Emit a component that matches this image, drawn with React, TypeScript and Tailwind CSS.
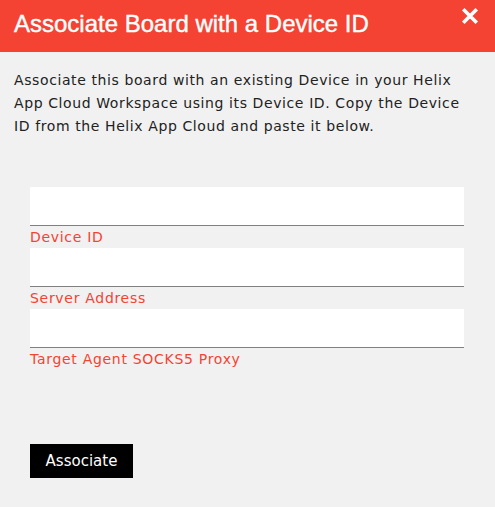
import React from "react";

const verdana = { fontFamily: "Verdana, 'DejaVu Sans', sans-serif" };

function Field({ label }: { label: string }) {
  return (
    <div className="flex flex-col">
      <input
        type="text"
        className="h-[39px] w-full bg-white border-0 border-b border-b-[#808080] outline-none"
      />
      <div className="h-[22px] text-[14px] leading-[22px] text-[#f44332] tracking-[0.7px]">{label}</div>
    </div>
  );
}

export default function App() {
  return (
    <div className="w-[495px] h-[507px] bg-[#f1f1f1] flex flex-col" style={verdana}>
      <div className="h-[52px] bg-[#f44332] flex items-start justify-between pl-[14px] pr-[17px] shrink-0">
        <div
          className="text-white text-[24px] leading-[24px] mt-[12px]"
          style={{ fontFamily: "'Liberation Sans', Arial, sans-serif", WebkitTextStroke: "0.4px white" }}
        >
          Associate Board with a Device ID
        </div>
        <svg width="16" height="16" viewBox="0 0 16 16" className="mt-[8px]">
          <path d="M2.5 2.5 L13.5 13.5 M13.5 2.5 L2.5 13.5" stroke="white" strokeWidth="3.6" strokeLinecap="square" />
        </svg>
      </div>
      <p className="pl-[14px] pr-[22px] pt-[17px] text-[14px] leading-[23px] text-[#222] tracking-[0.6px]">
        Associate this board with an existing Device in your Helix App Cloud Workspace using its Device ID. Copy the Device ID from the Helix App Cloud and paste it below.
      </p>
      <div className="px-[30px] pr-[31px] mt-[49px] flex flex-col">
        <Field label="Device ID" />
        <Field label="Server Address" />
        <Field label="Target Agent SOCKS5 Proxy" />
      </div>
      <div className="px-[30px] mt-[74px]">
        <button className="w-[103px] h-[34px] bg-black text-white text-[15px] flex items-center justify-center">
          Associate
        </button>
      </div>
    </div>
  );
}
